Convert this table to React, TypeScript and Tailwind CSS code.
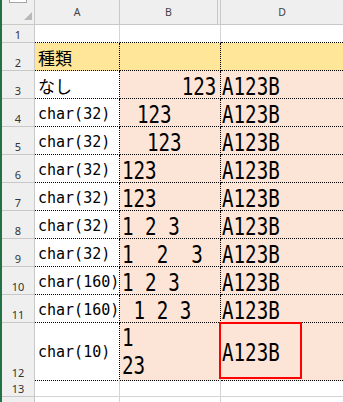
import React from "react";

const mono = "font-['DejaVu_Sans_Mono','Noto_Sans_CJK_JP',monospace]";
const jp = "font-['Noto_Sans_CJK_JP',sans-serif]";
const ui = "font-['Noto_Sans','Liberation_Sans',sans-serif]";

const cols = "grid grid-cols-[33px_85px_101px_1fr]";

type DataRow = {
  n: number;
  a: string;
  jpA?: boolean;
  b: string;
  bCls: string;
  bOrigin: string;
};

const rows: DataRow[] = [
  { n: 3, a: "なし", jpA: true, b: "123", bCls: "justify-end pr-[4px]", bOrigin: "origin-right" },
  { n: 4, a: "char(32)", b: "123", bCls: "pl-[17px]", bOrigin: "origin-left" },
  { n: 5, a: "char(32)", b: "123", bCls: "pl-[27px]", bOrigin: "origin-left" },
  { n: 6, a: "char(32)", b: "123", bCls: "pl-[2px]", bOrigin: "origin-left" },
  { n: 7, a: "char(32)", b: "123", bCls: "pl-[2px]", bOrigin: "origin-left" },
  { n: 8, a: "char(32)", b: "1 2 3", bCls: "pl-[2px]", bOrigin: "origin-left" },
  { n: 9, a: "char(32)", b: "1  2  3", bCls: "pl-[2px]", bOrigin: "origin-left" },
  { n: 10, a: "char(160)", b: "1\u00a02\u00a03", bCls: "pl-[2px]", bOrigin: "origin-left" },
  { n: 11, a: "char(160)", b: "\u00a01\u00a02\u00a03", bCls: "pl-[2px]", bOrigin: "origin-left" },
];

function RowHead({ n }: { n: number }) {
  return (
    <div
      className={`flex items-end justify-center bg-[#efefef] border-r border-b border-[#c8c8c8] text-[11px] leading-[13px] text-[#333] pb-[1px] ${ui}`}
    >
      {n}
    </div>
  );
}

// Tall, narrow digits: a wide monospace face squeezed horizontally
function Big({ text, origin }: { text: string; origin: string }) {
  return (
    <span className={`inline-block shrink-0 whitespace-pre scale-x-[0.8] ${origin}`}>{text}</span>
  );
}

export default function App() {
  return (
    <div className="relative flex w-[343px] h-[402px] overflow-hidden bg-white text-black">
      <div className="w-[2px] shrink-0 bg-[#217346]" />
      <div className="flex min-w-0 flex-1 flex-col">
        {/* column headings */}
        <div className={`${cols} h-[25px] shrink-0 bg-[#efefef] text-[10.5px] text-[#444] ${ui}`}>
          <div className="relative border-r border-b border-[#c8c8c8]">
            <div className="absolute left-[7px] top-[-1px] h-[4px] w-[18px] border border-[#a6a6a6] bg-white" />
            <svg className="absolute left-[22px] top-[12px]" width="9" height="9" viewBox="0 0 9 9">
              <polygon points="8,0 8,8 0,8" fill="#b9b9b9" />
            </svg>
          </div>
          <div className="flex items-center justify-center pt-[2px] border-r border-b border-[#c8c8c8]">A</div>
          <div className="flex border-r border-b border-[#c8c8c8]">
            <div className="flex flex-1 items-center justify-center pt-[2px]">B</div>
            <div className="w-[3px] border-l border-[#c8c8c8]" />
          </div>
          <div className="flex items-center justify-center pt-[2px] border-b border-[#c8c8c8]">D</div>
        </div>

        {/* row 1 */}
        <div className={`${cols} h-[18px] shrink-0`}>
          <RowHead n={1} />
          <div className="border-b border-r border-dotted border-b-black border-r-[#d4d4d4] [border-right-style:solid]" />
          <div className="border-b border-r border-dotted border-b-black border-r-[#d4d4d4] [border-right-style:solid]" />
          <div className="border-b border-dotted border-black" />
        </div>

        {/* row 2: table heading */}
        <div className={`${cols} h-[28px] shrink-0`}>
          <RowHead n={2} />
          <div className="flex items-end pl-[3px] pb-[3px] bg-[#ffe699] border-r border-b border-dotted border-black">
            <span className={`${jp} text-[17px] leading-[18px]`}>種類</span>
          </div>
          <div className="bg-[#ffe699] border-r border-b border-dotted border-black" />
          <div className="bg-[#ffe699] border-b border-dotted border-black" />
        </div>

        {/* rows 3-11 */}
        {rows.map((r) => (
          <div key={r.n} className={`${cols} h-[28px] shrink-0`}>
            <RowHead n={r.n} />
            <div
              className={`flex items-end pl-[3px] pb-[3px] border-r border-b border-dotted border-black ${mono} text-[15px] leading-[18px]`}
            >
              {r.jpA ? <span className={`${jp} text-[17px] leading-[18px]`}>{r.a}</span> : r.a}
            </div>
            <div
              className={`flex min-w-0 items-end pb-[1px] bg-[#fce4d6] border-r border-b border-dotted border-black ${mono} text-[24px] leading-[20px] ${r.bCls}`}
            >
              <Big text={r.b} origin={r.bOrigin} />
            </div>
            <div
              className={`flex min-w-0 items-end pl-[1px] pb-[1px] bg-[#fce4d6] border-b border-dotted border-black ${mono} text-[24px] leading-[20px]`}
            >
              <Big text="A123B" origin="origin-left" />
            </div>
          </div>
        ))}

        {/* row 12: line feed inside the cell */}
        <div className={`${cols} h-[56px] shrink-0`}>
          <RowHead n={12} />
          <div
            className={`flex items-center pl-[3px] border-r border-b border-dotted border-black ${mono} text-[15px] leading-[18px]`}
          >
            char(10)
          </div>
          <div
            className={`flex min-w-0 items-start pl-[2px] pt-[1px] bg-[#fce4d6] border-r border-b border-dotted border-black ${mono} text-[24px] leading-[28px]`}
          >
            <Big text={"1\n23"} origin="origin-left" />
          </div>
          <div
            className={`relative flex min-w-0 items-center pl-[1px] pt-[2px] bg-[#fce4d6] border-b border-dotted border-black ${mono} text-[24px] leading-[20px]`}
          >
            <Big text="A123B" origin="origin-left" />
            <div className="absolute left-[-2px] top-[-1px] h-[57px] w-[83px] border-2 border-[#ff0000]" />
          </div>
        </div>

        {/* row 13 */}
        <div className={`${cols} h-[18px] shrink-0`}>
          <RowHead n={13} />
          <div className="border-r border-b border-[#d4d4d4]" />
          <div className="border-r border-b border-[#d4d4d4]" />
          <div className="border-b border-[#d4d4d4]" />
        </div>

        {/* row 14, cut off */}
        <div className={`${cols} flex-1`}>
          <div className="bg-[#efefef] border-r border-[#c8c8c8]" />
          <div className="border-r border-[#d4d4d4]" />
          <div className="border-r border-[#d4d4d4]" />
          <div />
        </div>
      </div>
    </div>
  );
}
